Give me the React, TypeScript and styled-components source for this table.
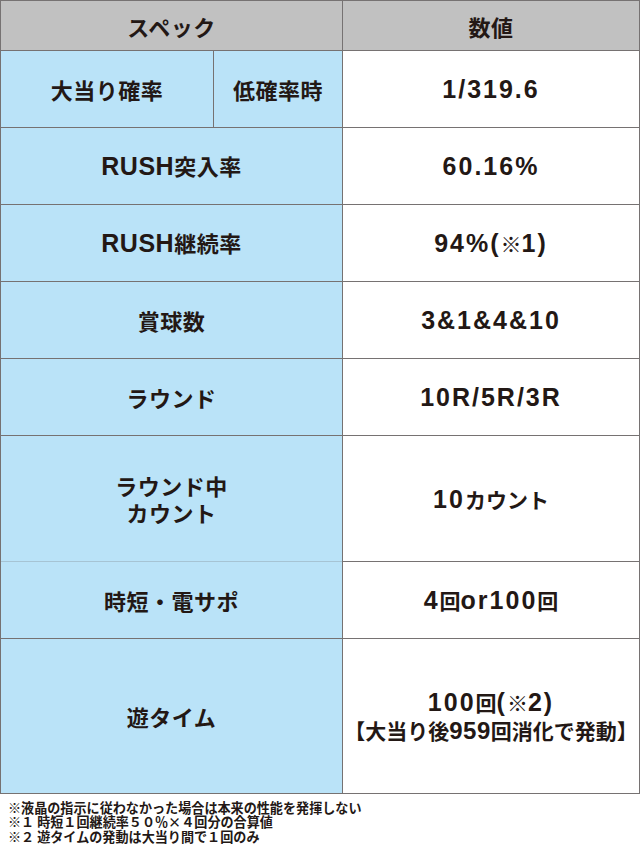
import React from "react";
import styled, {createGlobalStyle} from "styled-components";

const GlobalStyle = createGlobalStyle`
	html, body {
		margin: 0;
		padding: 0;
		background: #ffffff;
	}
	body {
		font-family: "Noto Sans CJK JP", "Liberation Sans", sans-serif;
		color: #231815;
	}
`;

const Page = styled.div`
	width: 640px;
`;

const Grid = styled.div`
	display: grid;
	grid-template-columns: 212px 128px 296px;
	grid-template-rows: 49px 76px 76px 76px 76px 76px 125px 76px 154px;
	gap: 1px;
	padding: 1px;
	background: #767272;
	width: 640px;
	box-sizing: border-box;
`;

const Cell = styled.div<{$span?: number}>`
	display: flex;
	flex-direction: column;
	align-items: center;
	justify-content: center;
	text-align: center;
	font-weight: 700;
	grid-column: span ${p => p.$span ?? 1};
`;

const HeadCell = styled(Cell)`
	background: #c1c1c1;
	font-size: 22px;
	letter-spacing: 0.5px;
`;

const LabelCell = styled(Cell)<{$soft?: boolean}>`
	background: #bae3f8;
	font-size: 22px;
	letter-spacing: 0.5px;
	line-height: 27px;
	${p => p.$soft && "box-shadow: 0 -1px 0 #a6c4d4;"}
`;

const ValueCell = styled(Cell)`
	background: #ffffff;
	font-size: 21px;
	line-height: 28px;
`;

const Latin = styled.span<{$size: number; $track: number}>`
	font-family: "Liberation Sans", Arial, sans-serif;
	font-size: ${p => p.$size}px;
	letter-spacing: ${p => p.$track}px;
`;

const SubLine = styled.span`
	font-size: 21px;
`;

const Notes = styled.div`
	padding: 7px 0 0 8px;
	font-size: 13.1px;
	line-height: 14.4px;
	font-weight: 700;
	color: #231815;
`;

// wrap ascii runs in a latin font, leave the rest to the CJK font
function Mixed({text, size, track}: {text: string; size: number; track: number}) {
	const parts = text.match(/[\x20-\x7e]+|[^\x20-\x7e]+/g) || [];
	return (
		<>
			{parts.map((p, i) =>
				/^[\x20-\x7e]+$/.test(p)
					? <Latin key={i} $size={size} $track={track}>{p}</Latin>
					: <React.Fragment key={i}>{p}</React.Fragment>
			)}
		</>
	);
}

type Row = {label: string[]; value: string[]; soft?: boolean};

const rows: Row[] = [
	{label: ["RUSH突入率"], value: ["60.16%"]},
	{label: ["RUSH継続率"], value: ["94%(※1)"]},
	{label: ["賞球数"], value: ["3&1&4&10"]},
	{label: ["ラウンド"], value: ["10R/5R/3R"]},
	{label: ["ラウンド中", "カウント"], value: ["10カウント"]},
	{label: ["時短・電サポ"], value: ["4回or100回"], soft: true},
	{label: ["遊タイム"], value: ["100回(※2)", "【大当り後959回消化で発動】"]},
];

export default function App() {
	return (
		<Page>
			<GlobalStyle/>
			<Grid>
				<HeadCell $span={2}>スペック</HeadCell>
				<HeadCell>数値</HeadCell>

				<LabelCell>大当り確率</LabelCell>
				<LabelCell>低確率時</LabelCell>
				<ValueCell><div><Mixed text="1/319.6" size={25} track={2}/></div></ValueCell>

				{rows.map(row => (
					<React.Fragment key={row.label.join("")}>
						<LabelCell $span={2} $soft={row.soft}>
							{row.label.map(l => <div key={l}><Mixed text={l} size={25} track={0.5}/></div>)}
						</LabelCell>
						<ValueCell>
							{row.value.map((v, i) => i === 0
								? <div key={v}><Mixed text={v} size={25} track={2}/></div>
								: <SubLine key={v}><Mixed text={v} size={24} track={0.5}/></SubLine>
							)}
						</ValueCell>
					</React.Fragment>
				))}
			</Grid>
			<Notes>
				<div>※液晶の指示に従わなかった場合は本来の性能を発揮しない</div>
				<div>※１ 時短１回継続率５０％×４回分の合算値</div>
				<div>※２ 遊タイムの発動は大当り間で１回のみ</div>
			</Notes>
		</Page>
	);
}
